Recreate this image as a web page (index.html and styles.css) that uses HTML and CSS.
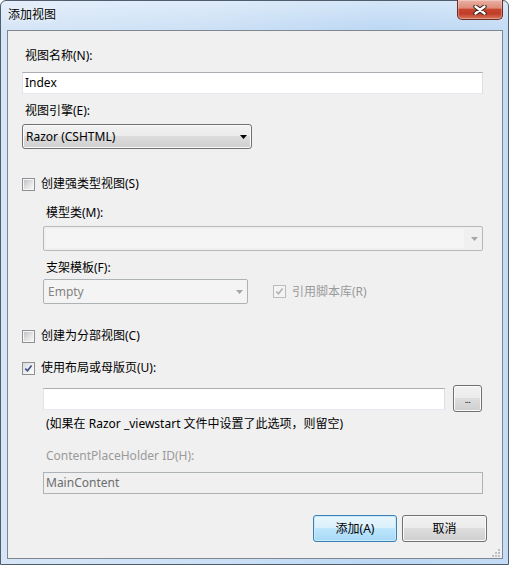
FILE: index.html
```html
<!DOCTYPE html>
<html lang="zh-CN">
<head>
  <meta charset="UTF-8">
  <meta name="viewport" content="width=device-width, initial-scale=1.0">
  <title>添加视图</title>
  <link rel="stylesheet" href="styles.css">
</head>
<body>
  <div class="window">
    <div class="titlebar">
      <span class="title">添加视图</span>
      <div class="close-btn">
        <svg width="14" height="10" viewBox="0 0 14 10">
          <path d="M2.5 1.5 L11.5 8.5 M11.5 1.5 L2.5 8.5" stroke="#3a2320" stroke-width="4.4" stroke-linecap="round"/>
          <path d="M2.5 1.5 L11.5 8.5 M11.5 1.5 L2.5 8.5" stroke="#ffffff" stroke-width="2.4" stroke-linecap="round"/>
        </svg>
      </div>
    </div>

    <div class="client">
      <label class="label">视图名称(N):</label>
      <div class="textbox">Index</div>

      <label class="label label-gap">视图引擎(E):</label>
      <div class="dropdown engine">
        <span>Razor (CSHTML)</span>
        <svg class="arrow" width="7" height="4" viewBox="0 0 7 4"><path d="M0 0 H7 L3.5 4 Z" fill="#000"/></svg>
      </div>

      <div class="check-row strong-row">
        <span class="check"></span>
        <span>创建强类型视图(S)</span>
      </div>

      <!-- strongly typed options, disabled -->
      <div class="sub-group">
        <label class="label model-label">模型类(M):</label>
        <div class="combo">
          <div class="combo-edit"></div>
          <svg class="arrow" width="7" height="4" viewBox="0 0 7 4"><path d="M0 0 H7 L3.5 4 Z" fill="#a6a6a6"/></svg>
        </div>

        <label class="label label-gap">支架模板(F):</label>
        <div class="template-row">
          <div class="dropdown disabled scaffold">
            <span>Empty</span>
            <svg class="arrow" width="7" height="4" viewBox="0 0 7 4"><path d="M0 0 H7 L3.5 4 Z" fill="#a6a6a6"/></svg>
          </div>
          <div class="check-row disabled-text">
            <span class="check checked disabled">
              <svg width="9" height="9" viewBox="0 0 9 9"><path d="M1.3 4.6 L3.5 6.8 L7.6 1.6" fill="none" stroke="#b3b3b3" stroke-width="1.6"/></svg>
            </span>
            <span>引用脚本库(R)</span>
          </div>
        </div>
      </div>

      <div class="check-row partial-row">
        <span class="check"></span>
        <span>创建为分部视图(C)</span>
      </div>

      <div class="check-row layout-row">
        <span class="check checked">
          <svg width="9" height="9" viewBox="0 0 9 9"><path d="M1.3 4.6 L3.5 6.8 L7.6 1.6" fill="none" stroke="#3c4f80" stroke-width="1.6"/></svg>
        </span>
        <span>使用布局或母版页(U):</span>
      </div>

      <div class="sub-group">
        <div class="layout-input">
          <div class="textbox layout-box"></div>
          <div class="btn browse">...</div>
        </div>
        <p class="hint">(如果在 Razor _viewstart 文件中设置了此选项，则留空)</p>

        <label class="label placeholder-label disabled-text">ContentPlaceHolder ID(H):</label>
        <div class="textbox disabled">MainContent</div>
      </div>

      <div class="actions">
        <div class="btn default">添加(A)</div>
        <div class="btn cancel">取消</div>
      </div>

      <svg class="grip" width="8" height="8" viewBox="0 0 8 8">
        <rect x="6" y="0" width="2" height="2" fill="#b8c0c8"/>
        <rect x="3" y="3" width="2" height="2" fill="#b8c0c8"/>
        <rect x="6" y="3" width="2" height="2" fill="#b8c0c8"/>
        <rect x="0" y="6" width="2" height="2" fill="#b8c0c8"/>
        <rect x="3" y="6" width="2" height="2" fill="#b8c0c8"/>
        <rect x="6" y="6" width="2" height="2" fill="#b8c0c8"/>
      </svg>
    </div>
  </div>
</body>
</html>
```

FILE: styles.css
```css
body {
  margin: 0;
  font-family: "Noto Sans", "Noto Sans CJK SC", sans-serif;
  font-size: 12px;
  line-height: 16px;
  color: #000;
  background: #fff;
}

.window {
  width: 509px;
  height: 565px;
  box-sizing: border-box;
  display: flex;
  flex-direction: column;
  padding: 0 5px 5px 6px;
  border: 1px solid #4f5d6e;
  border-radius: 6px 6px 0 0;
  background:
    linear-gradient(to bottom, rgba(255, 255, 255, 0.35), rgba(255, 255, 255, 0) 28px),
    linear-gradient(to right, #d6e6f7 0%, #cde1f6 40%, #bdd8f4 75%, #c4dcf4 100%);
}

.titlebar {
  height: 29px;
  display: flex;
  justify-content: space-between;
  align-items: flex-start;
  flex-shrink: 0;
}

.title {
  margin: 6px 0 0 1px;
  text-shadow: 0 0 6px rgba(255, 255, 255, 0.9);
}

.close-btn {
  width: 46px;
  height: 20px;
  margin-top: -1px;
  box-sizing: border-box;
  border: 1px solid #6a2b22;
  border-top: none;
  border-radius: 0 0 5px 5px;
  display: flex;
  align-items: center;
  justify-content: center;
  background: linear-gradient(to bottom, #eab1a4 0%, #dd8c78 42%, #c8452e 50%, #c13d28 72%, #d8775c 100%);
  box-shadow: inset 0 0 0 1px rgba(255, 255, 255, 0.3);
}

.client {
  flex: 1;
  position: relative;
  border: 1px solid #7f8690;
  background: #f0f0f0;
  padding: 17px 19px 0 14px;
}

.label {
  display: block;
  height: 16px;
  padding-left: 3px;
}

.label-gap {
  margin-top: 9px;
}

.textbox {
  margin-top: 8px;
  height: 22px;
  box-sizing: border-box;
  padding: 0 2px;
  line-height: 20px;
  background: #fff;
  border: 1px solid;
  border-color: #abadb3 #dbdfe6 #e3e9ef #e2e3ea;
}

.textbox.disabled {
  background: #f0f0f0;
  border-color: #adb2b5;
  color: #6d6d6d;
}

.dropdown {
  margin-top: 5px;
  height: 25px;
  box-sizing: border-box;
  display: flex;
  align-items: center;
  justify-content: space-between;
  padding: 0 4px 0 3px;
  border: 1px solid #707070;
  border-radius: 3px;
  background: linear-gradient(to bottom, #f2f2f2 0%, #ebebeb 50%, #dddddd 50%, #cfcfcf 100%);
  box-shadow: inset 0 0 0 1px #fbfbfb;
}

.engine {
  width: 230px;
}

.dropdown.disabled {
  margin-top: 0;
  background: #f4f4f4;
  border-color: #adb2b5;
  border-radius: 2px;
  box-shadow: none;
  color: #838383;
  padding-left: 4px;
}

.scaffold {
  width: 205px;
}

.check-row {
  height: 16px;
  display: flex;
  align-items: center;
  gap: 6px;
}

.strong-row {
  margin-top: 27px;
}

.partial-row {
  margin-top: 24px;
}

.layout-row {
  margin-top: 16px;
}

.check {
  width: 13px;
  height: 13px;
  box-sizing: border-box;
  flex-shrink: 0;
  display: flex;
  align-items: center;
  justify-content: center;
  padding: 1px;
  border: 1px solid #8e8f8f;
  background: linear-gradient(135deg, #bfc3c8 0%, #e4e5e7 60%, #f6f6f6 100%) content-box, #f6f6f6;
}

.check.checked {
  padding: 0;
  background: linear-gradient(135deg, #d9dbde 0%, #f1f1f2 60%, #fbfbfb 100%);
}

.check.disabled {
  border-color: #bcbcbc;
  background: #f4f4f4;
}

.disabled-text {
  color: #9a9a9a;
}

.sub-group {
  padding-left: 21px;
}

.model-label {
  margin-top: 13px;
}

.combo {
  margin-top: 5px;
  height: 25px;
  box-sizing: border-box;
  display: flex;
  align-items: center;
  padding: 2px 4px 2px 2px;
  border: 1px solid #b5b9bc;
  border-radius: 2px;
  background: #f0f0f0;
}

.combo-edit {
  flex: 1;
  align-self: stretch;
  margin-right: 7px;
  background: #f5f5f5;
}

.template-row {
  margin-top: 3px;
  display: flex;
  align-items: center;
  gap: 25px;
}

.layout-input {
  margin-top: 9px;
  display: flex;
  align-items: center;
  gap: 8px;
}

.layout-box {
  margin-top: 0;
  width: 402px;
}

.btn {
  height: 27px;
  box-sizing: border-box;
  display: flex;
  align-items: center;
  justify-content: center;
  border: 1px solid #707070;
  border-radius: 3px;
  background: linear-gradient(to bottom, #f2f2f2 0%, #ebebeb 50%, #dddddd 50%, #cfcfcf 100%);
  box-shadow: inset 0 0 0 1px #fbfbfb;
}

.browse {
  width: 29px;
  font-size: 9px;
  letter-spacing: -0.5px;
  padding-top: 3px;
}

.hint {
  margin: 4px 0 0;
  padding-left: 3px;
  height: 16px;
}

.placeholder-label {
  margin-top: 16px;
}

.actions {
  margin: 21px -4px 0 0;
  display: flex;
  justify-content: flex-end;
  gap: 5px;
}

.btn.default {
  width: 84px;
  border-color: #3c7fb1;
  background: linear-gradient(to bottom, #eaf6fd 0%, #d9f0fc 50%, #bee6fd 50%, #a7d9f5 100%);
  box-shadow: inset 0 0 0 1px #c6ebfd;
}

.btn.cancel {
  width: 85px;
}

.grip {
  position: absolute;
  right: 2px;
  bottom: 1px;
}
```
